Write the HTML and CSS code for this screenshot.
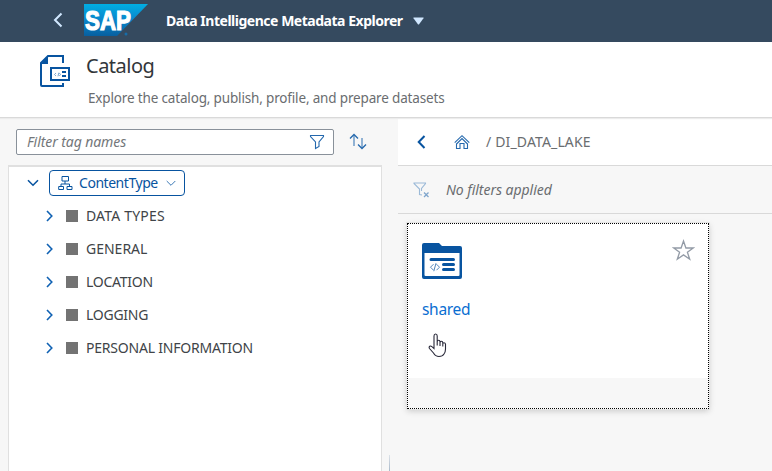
FILE: index.html
```html
<!DOCTYPE html>
<html lang="en">
<head>
<meta charset="utf-8">
<title>Data Intelligence Metadata Explorer</title>
<link rel="stylesheet" href="styles.css">
</head>
<body>
<div class="app">
  <header class="shell">
    <svg class="shell-back" width="10" height="16" viewBox="0 0 10 16"><path d="M8.500 1.500L2 8l6.500 6.500" fill="none" stroke="#d1e8ff" stroke-width="2"/></svg>
    <svg class="logo" width="64" height="32" viewBox="0 0 64 32">
      <defs><linearGradient id="sap" x1="0" y1="0" x2="0" y2="1"><stop offset="0" stop-color="#00aee3"/><stop offset=".5" stop-color="#0a86cb"/><stop offset="1" stop-color="#075f9f"/></linearGradient></defs>
      <path d="M0 0h64L33 32H0z" fill="url(#sap)"/>
      <text class="logo-text" x="1" y="25.500" textLength="46" lengthAdjust="spacingAndGlyphs">SAP</text>
      <circle cx="42" cy="30" r="1.500" fill="#176da9"/>
    </svg>
    <h1 class="product">Data Intelligence Metadata Explorer</h1>
    <svg class="shell-caret" width="11" height="8" viewBox="0 0 11 8"><path d="M.8 .5h9.400q.8 0 .3.800L6.100 7.200q-.6.700-1.200 0L.5 1.300Q0 .5.800.5z" fill="#d1e8ff"/></svg>
  </header>
  <section class="page-head">
    <svg class="catalog-icon" width="31" height="33" viewBox="0 0 31 33"><g fill="none" stroke="#0854a0" stroke-width="2"><path d="M23 8V1H8L1 8v22q0 1 1 1h21v-3"/><path d="M11 13h18v12H11z"/></g><path d="M8 1v8H1z" fill="#0854a0"/><path d="M22 16h4v2h-4zM22 20h4v2h-4z" fill="#0854a0"/><path d="M16 18l-1.500 1.500L16 21M18 21.300l.8-3.600M19.300 18l1.200 1.500-1.200 1.500" fill="none" stroke="#5d90c2" stroke-width=".8"/></svg>
    <div class="titles"><h2>Catalog</h2><p>Explore the catalog, publish, profile, and prepare datasets</p></div>
  </section>
  <main class="columns">
    <aside class="side">
      <div class="tag-bar">
        <div class="search"><span>Filter tag names</span>
          <svg width="16" height="16" viewBox="0 0 16 16"><path d="M1.500 1.500h13v1L10 8v4.500L6.500 14.500V8L1.500 2.500z" fill="none" stroke="#2468ad" stroke-width="1.100"/></svg>
        </div>
        <svg class="sort" width="18" height="17" viewBox="0 0 18 17"><g fill="none"><path d="M5 2v11M13 5v10" stroke-width="1.800" stroke="#85aad0"/><path d="M1 5.500L5 1.500l4 4M9 11.500l4 4 4-4" stroke="#2468ad" stroke-width="1.300"/></g></svg>
      </div>
      <div class="tree">
        <div class="root">
          <svg width="12" height="8" viewBox="0 0 12 8"><path d="M1 1.200l5 5 5-5" fill="none" stroke="#0854a0" stroke-width="1.600"/></svg>
          <button class="type"><svg width="15" height="15" viewBox="0 0 15 15"><path d="M4 .5h6.500v4.500H4zM.7 10.500h4.800v3H.7zM9 10.500h5v3H9zM7 5v3M3 10.500V8h8.500v2.500" fill="none" stroke="#0854a0"/></svg><span>ContentType</span><svg width="10" height="7" viewBox="0 0 10 7"><path d="M.7 1L5 5.300 9.300 1" fill="none" stroke="#3b78b5" stroke-width="1"/></svg></button>
        </div>
        <ul>
          <li><svg width="7" height="12" viewBox="0 0 7 12"><path d="M1 1l4.800 5L1 11"/></svg><i></i><span class="t1">DATA TYPES</span></li>
          <li><svg width="7" height="12" viewBox="0 0 7 12"><path d="M1 1l4.800 5L1 11"/></svg><i></i><span class="t2">GENERAL</span></li>
          <li><svg width="7" height="12" viewBox="0 0 7 12"><path d="M1 1l4.800 5L1 11"/></svg><i></i><span class="t3">LOCATION</span></li>
          <li><svg width="7" height="12" viewBox="0 0 7 12"><path d="M1 1l4.800 5L1 11"/></svg><i></i><span class="t4">LOGGING</span></li>
          <li><svg width="7" height="12" viewBox="0 0 7 12"><path d="M1 1l4.800 5L1 11"/></svg><i></i><span class="t5">PERSONAL INFORMATION</span></li>
        </ul>
      </div>
      <span class="splitter"></span>
    </aside>
    <section class="content">
      <nav class="crumbs">
        <svg class="crumb-back" width="9" height="14" viewBox="0 0 9 14"><path d="M7.500 1L1.700 7l5.800 6" fill="none" stroke="#0854a0" stroke-width="2"/></svg>
        <svg class="home" width="16" height="16" viewBox="0 0 16 16"><path d="M.7 8.700L8 1.700l7.300 7M2.500 9.500v5H6V9.500h4v5h3.500v-5M2.500 10L8 4.500l5.500 5.500" fill="none" stroke="#2468ad" stroke-width="1.100"/></svg>
        <span class="slash">/</span><span class="path">DI_DATA_LAKE</span>
      </nav>
      <div class="filters">
        <svg width="17" height="16" viewBox="0 0 17 16"><path d="M9 13l-2.500-.5V7L1 1.500V1h11.500v.5L8.500 6.500V9" fill="none" stroke="#9cbad8" stroke-width="1.100"/><path d="M11 10.500l4.500 4.500m0-4.500L11 15" stroke="#7fa5cc" stroke-width="1.300"/></svg>
        <span>No filters applied</span>
      </div>
      <div class="cards">
        <article class="card">
          <div class="card-body">
            <div class="card-top">
              <svg width="40" height="37" viewBox="0 0 40 37"><path d="M2 0h15l3 3h18q2 0 2 2v29q0 2-2 2H2q-2 0-2-2V2Q0 0 2 0z" fill="#0854a0"/><path d="M2.500 10h35v22q0 1-1 1h-33q-1 0-1-1z" fill="#fff"/><path d="M9 16.500h22.500M21.500 21.500h10M21.500 26.500h10" stroke="#0854a0" stroke-width="3" stroke-linecap="round"/><path d="M11.500 21L8.500 24l3 3M14.500 21l3 3-3 3M14 20l-2.200 8" fill="none" stroke="#4f85bb" stroke-width="1" transform="translate(0 .2)"/></svg>
              <svg class="star" width="23" height="22" viewBox="0 0 23 22"><path d="M11.500 2l2.400 7h7.300l-5.800 4.200 2.300 7-6.200-4.300-6.200 4.300 2.300-7L1.800 9h7.300z" fill="none" stroke="#939ba6" stroke-width="1.300"/></svg>
            </div>
            <a class="name">shared</a>
          </div>
          <div class="card-foot"></div>
        </article>
      </div>
      <svg class="cursor" width="19" height="25" viewBox="0 0 19 25"><path d="M6 14V3q0-2 1.600-2T9.200 3v6q0-1.700 1.400-1.700T12 9v1q0-1.700 1.400-1.700T14.800 10v1q0-1.300 1.200-1.300t1.500 1.500V16q0 3-1.500 5-1.500 2.500-5 2.500t-5.500-3.500L1.500 15.500q-.8-1.500.2-2.200 1-.7 2.200.4L6 15.500zM9.200 9v3.500M12 10v3M14.800 11v2.500" fill="#fff" stroke="#282839" stroke-width="1.100"/></svg>
    </section>
  </main>
</div>
</body>
</html>
```
FILE: styles.css
```css
* { box-sizing: border-box; }
body { margin: 0; font-family: "Noto Sans", sans-serif; font-size: 14px; color: #32363a; }
svg { display: block; flex: none; }
h1, h2, p, ul { margin: 0; padding: 0; font-weight: 400; }
span, a { white-space: nowrap; }
.app { width: 772px; height: 471px; overflow: hidden; background: #f7f7f7; display: flex; flex-direction: column; }
.shell { height: 42px; flex: none; background: #354a5f; display: flex; align-items: center; padding-left: 53px; }
.logo { margin-left: 21px; position: relative; top: -1px; }
.shell-back { position: relative; top: -1px; }
.logo-text { font: bold 27px "Liberation Sans", sans-serif; fill: #fff; stroke: #fff; stroke-width: 1.2px; }
.product { margin-left: 18px; color: #fff; font-size: 14px; font-weight: 700; line-height: 20px; white-space: nowrap; letter-spacing: -.48px; width: 237px; margin-top: -1px; }
.shell-caret { margin-left: 10px; }
.page-head { height: 76px; flex: none; background: #fff; border-bottom: 1px solid #d9d9d9; display: flex; padding: 13px 0 0 40px; z-index: 1; box-shadow: 0 1px 1px #ececec; }
.titles { padding-left: 15px; }
h2 { font-size: 20px; line-height: 24px; color: #32363a; margin-top: -1px; letter-spacing: -.5px; }
p { padding-left: 2px; margin-top: 10px; line-height: 20px; color: #6a6d70; letter-spacing: -.16px; font-size: 13.5px; white-space: nowrap; }
.columns { display: flex; flex: 1; min-height: 0; }
.side { width: 398px; padding-left: 8px; display: flex; flex-direction: column; position: relative; }
.tag-bar { height: 47px; display: flex; padding: 11px 0 0 8px; }
.search { width: 318px; height: 26px; border: 1px solid #89919a; border-radius: 2px; background: #fff; display: flex; align-items: center; justify-content: space-between; padding: 0 8px 0 10px; font-style: italic; color: #74777a; letter-spacing: -.08px; }
.search span { margin-top: -1px; }
.sort { margin: 4px 0 0 15px; }
.tree { width: 374px; flex: 1; background: #fff; border: 1px solid #e0e0e0; border-top: 2px solid #e0e0e0; border-bottom: 0; }
.root { height: 32px; display: flex; align-items: center; padding-left: 18px; }
.type { margin-left: 10px; width: 136px; height: 26px; border: 1px solid #0854a0; border-radius: 4px; background: #fff; display: flex; align-items: center; padding: 0 8px; font: 14px "Noto Sans", sans-serif; color: #0854a0; }
.type span { width: 79px; margin: -1px 0 0 6px; letter-spacing: -.46px; text-align: left; }
.type svg:last-child { margin-left: 8px; }
li { height: 33px; display: flex; align-items: center; list-style: none; padding-left: 37px; color: #404448; }
li svg { fill: none; stroke: #0f61b3; stroke-width: 1.6px; }
i { width: 12px; height: 12px; background: #737373; margin: 0 8px 0 13px; }
.t1 { letter-spacing: .18px; }
.t3, .t4 { letter-spacing: -.25px; }
.t5 { letter-spacing: -.21px; }
.splitter { position: absolute; left: 389px; bottom: 0; width: 1px; height: 16px; background: linear-gradient(#dce2e8, #a9b9ca); }
.content { flex: 1; min-width: 0; position: relative; }
.crumbs { height: 48px; background: #fff; border-bottom: 1px solid #d9d9d9; display: flex; align-items: center; padding-left: 19px; color: #6a6d70; }
.home { margin-left: 28px; }
.slash { margin: -1px 0 0 16px; }
.path { margin: -1px 0 0 4px; letter-spacing: .14px; }
.filters { height: 48px; border-bottom: 1px solid #d9d9d9; display: flex; align-items: center; padding-left: 15px; color: #6a6d70; font-style: italic; }
.filters span { margin-left: 16px; letter-spacing: -.04px; }
.cards { padding: 9px 0 0 9px; }
.card { width: 302px; height: 186px; border: 1px dotted #000; background: #fff; box-shadow: 0 0 0 1px #e4e4e4, 0 2px 6px #c8c8c8; }
.card-body { height: 154px; padding: 19px 14px 0; }
.card-top { display: flex; justify-content: space-between; align-items: flex-start; }
.star { margin: -4px -1px 0 0; }
.name { display: block; color: #0a6ed1; font-size: 15.5px; letter-spacing: -.3px; line-height: 22px; margin-top: 18px; }
.card-foot { height: 30px; background: #f7f7f7; }
.cursor { position: absolute; left: 30px; top: 215px; }
```
